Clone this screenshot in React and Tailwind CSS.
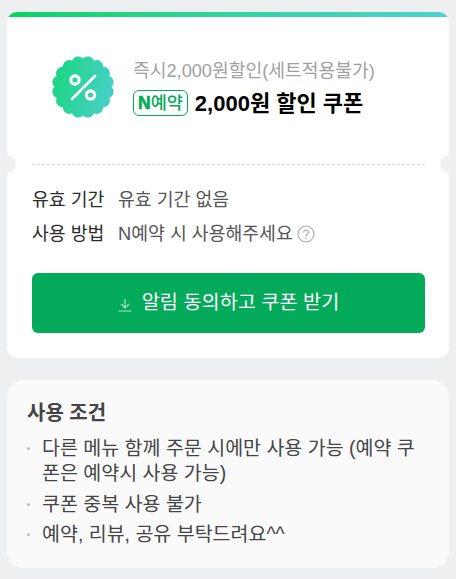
import React from 'react';

const FONT = '[font-family:"Liberation_Sans","Noto_Sans_CJK_KR",sans-serif]';

// 쿠폰 배지 외곽선: 반원 물결 16개
const scallop = (() => {
    const n = 16;
    const r = 28.5;
    const bump = 6.5;
    const pts = [];
    for (let i = 0; i < n; i++) {
        const a = (i / n) * Math.PI * 2 - Math.PI / 2;
        pts.push([32 + r * Math.cos(a), 32 + r * Math.sin(a)]);
    }
    let d = `M${pts[0][0].toFixed(2)} ${pts[0][1].toFixed(2)}`;
    for (let i = 1; i <= n; i++) {
        const p = pts[i % n];
        d += `A${bump} ${bump} 0 0 1 ${p[0].toFixed(2)} ${p[1].toFixed(2)}`;
    }
    return d + 'Z';
})();

const CouponBadge = () => (
    <svg width="64" height="64" viewBox="0 0 64 64" className="shrink-0">
        <defs>
            <linearGradient id="badge" x1="0" y1="0" x2="1" y2="0.25">
                <stop offset="0" stopColor="#17d67a" />
                <stop offset="1" stopColor="#46d0c4" />
            </linearGradient>
        </defs>
        <path d={scallop} fill="url(#badge)" />
        <circle cx="24" cy="25" r="4.2" fill="none" stroke="#fff" strokeWidth="3.2" />
        <circle cx="39.5" cy="40" r="4.2" fill="none" stroke="#fff" strokeWidth="3.2" />
        <path d="M44 21 21 44" stroke="#fff" strokeWidth="2.6" strokeLinecap="round" />
    </svg>
);

const Row = ({ label, children }) => (
    <div className="flex items-center h-[34px] text-[18.3px]">
        <span className="w-[86px] shrink-0 text-[#2b2b2b]">{label}</span>
        <span className="flex items-center text-[#555]">{children}</span>
    </div>
);

const Item = ({ children }) => (
    <li className="relative pl-[15px] text-[19.5px] leading-[25px] mb-[5.5px] text-[#444] break-all">
        <span className="absolute left-0 top-[11px] w-[3px] h-[3px] rounded-full bg-[#bbb]" />
        {children}
    </li>
);

export default function App() {
    return (
        <div className={`${FONT} w-[456px] h-[579px] overflow-hidden bg-[#eeeff1] pt-3 px-[7px]`}>
            <div className="relative w-[442px] h-[346px] bg-white rounded-[10px] overflow-hidden">
                <div className="h-[5px] bg-gradient-to-r from-[#00d563] to-[#4dd0cf]" />
                <div className="flex items-start h-[147px] pl-[44px] pt-[38px]">
                    <CouponBadge />
                    <div className="ml-[18px] mt-[4px]">
                        <p className="text-[18.2px] leading-[24px] text-[#a0a0a0]">즉시2,000원할인(세트적용불가)</p>
                        <div className="flex items-center h-[26px] mt-[7px]">
                            <span className="flex items-center h-[26px] px-[4px] border border-[#03aa5a] rounded-[6px] text-[17.5px] font-medium text-[#03aa5a]">
                                <b className="font-black [-webkit-text-stroke:0.6px_#03aa5a]">N</b>예약
                            </span>
                            <span className="ml-[7px] text-[22px] font-bold text-black">2,000원 할인 쿠폰</span>
                        </div>
                    </div>
                </div>
                <div className="ml-[25px] mr-[24px] border-t border-dashed border-[#d8d8d8]" />
                <span className="absolute left-[-9px] top-[143px] w-[18px] h-[18px] rounded-full bg-[#eeeff1]" />
                <span className="absolute right-[-9px] top-[143px] w-[18px] h-[18px] rounded-full bg-[#eeeff1]" />
                <div className="pl-[25px] pr-[24px] pt-[18px]">
                    <Row label="유효 기간">유효 기간 없음</Row>
                    <Row label="사용 방법">
                        N예약 시 사용해주세요
                        <svg width="18" height="18" viewBox="0 0 18 18" fill="none" className="ml-[4px]">
                            <circle cx="9" cy="9" r="8" stroke="#aaa" strokeWidth="1.1" />
                            <path d="M6.7 7.2a2.3 2.3 0 1 1 3.5 2c-.8.5-1.2.9-1.2 1.9" stroke="#aaa" strokeWidth="1.1" strokeLinecap="round" />
                            <circle cx="9" cy="13.2" r=".8" fill="#aaa" />
                        </svg>
                    </Row>
                    <button className="flex items-center justify-center w-full h-[60px] mt-[22px] rounded-[6px] bg-[#03aa5a] text-white text-[19.7px]">
                        <svg width="14" height="14" viewBox="0 0 14 14" fill="none" stroke="#a8e4c6" strokeWidth="1.2" className="mr-[10px] mt-[3px]">
                            <path d="M7 1v8.5M3 6l4 4 4-4M.5 13h13" />
                        </svg>
                        알림 동의하고 쿠폰 받기
                    </button>
                </div>
            </div>
            <div className="mt-[22px] w-[442px] h-[188px] bg-[#fafafb] rounded-[16px] pl-[20px] pr-[20px] pt-[21px]">
                <h3 className="text-[20px] leading-[25px] font-bold text-[#444] mb-[10px]">사용 조건</h3>
                <ul>
                    <Item>다른 메뉴 함께 주문 시에만 사용 가능 (예약 쿠폰은 예약시 사용 가능)</Item>
                    <Item>쿠폰 중복 사용 불가</Item>
                    <Item>예약, 리뷰, 공유 부탁드려요^^</Item>
                </ul>
            </div>
        </div>
    );
}
